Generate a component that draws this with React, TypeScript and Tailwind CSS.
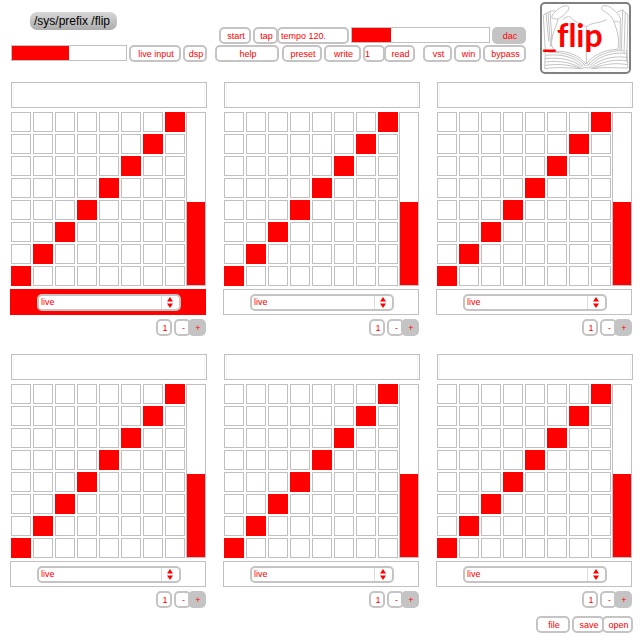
import React, { useState } from "react";

const STEPS = [0, 1, 2, 3, 4, 5, 6, 7];

const BOX = "h-[17px] rounded-[5px] border-2 border-[#c4c4c4] bg-white";

function Pill({
  children,
  className = "",
  filled = false,
}: {
  children: React.ReactNode;
  className?: string;
  filled?: boolean;
}) {
  return (
    <button
      type="button"
      className={`flex h-[17px] shrink-0 items-center justify-center whitespace-nowrap rounded-[5px] border-2 border-[#c4c4c4] pl-[2px] pt-0.5 leading-[13px] ${
        filled ? "bg-[#c4c4c4]" : "bg-white"
      } ${className}`}
    >
      {children}
    </button>
  );
}

function Meter({ label, fill, className }: { label: string; fill: number; className: string }) {
  return (
    <div
      role="meter"
      aria-label={label}
      aria-valuenow={fill}
      aria-valuemin={0}
      aria-valuemax={100}
      className={`h-4 border border-[#c0c0c0] bg-white ${className}`}
    >
      <div className="h-full bg-[#ff0000]" style={{ width: `${fill}%` }} />
    </div>
  );
}

function Logo() {
  return (
    <div className="relative h-[72px] w-[91px] shrink-0 overflow-hidden rounded-[5px] border-2 border-[#808080] bg-white">
      <svg
        viewBox="36 12 261 204"
        className="h-full w-full"
        fill="none"
        stroke="#b8b8b8"
        strokeWidth="2.5"
        strokeLinejoin="round"
        aria-hidden="true"
      >
        <path d="M169 80 C150 72 134 66 122 52 C116 48 106 52 98 58 M116 20 C108 14 94 20 84 28 C74 36 62 48 66 54 C70 58 78 54 84 58 C90 52 96 50 100 46 C108 38 120 28 116 20 M84 58 C78 84 64 104 64 130 C64 142 72 150 78 154 C112 152 148 166 168 192" />
        <path d="M169 80 C186 66 206 72 230 58 M216 20 C226 10 246 24 256 34 C266 44 276 56 270 66 C262 70 262 58 252 66 C246 50 236 42 226 36 C218 32 212 26 216 20 M252 66 C258 84 270 110 264 148 C228 148 188 164 170 192" />
        <path d="M169 80 V192" />
        <path d="M76 32 L60 34 L66 122 M60 34 L48 40 L56 124 M48 40 L40 46 L46 154 M54 38 L62 140" />
        <path d="M262 36 L278 30 L274 150 M278 30 L286 38 L282 160 M286 38 L294 44 L290 186 M271 66 L270 150" />
        <path d="M46 154 L44 206 C84 200 120 204 154 206 C162 202 180 202 188 206 C222 200 260 204 294 204 L290 150" />
        <path d="M48 166 C98 160 140 174 160 200 M46 176 C96 170 136 182 156 202 M46 186 C94 180 130 190 152 204 M46 196 C92 190 124 196 150 205 M54 158 C100 154 146 170 164 196" />
        <path d="M288 160 C236 156 198 174 178 200 M290 172 C240 166 202 182 182 202 M290 182 C244 176 208 190 186 204 M292 194 C248 186 214 196 190 205 M280 152 C236 150 194 168 174 196" />
        <path d="M160 190 C164 198 174 198 180 190" />
      </svg>
      <div className="absolute inset-x-0 top-[11px] whitespace-nowrap font-['Lato'] text-[32px] font-bold leading-[40px] text-[#ff0000] [font-variant-ligatures:none]">
        _flip
      </div>
    </div>
  );
}

function Sequencer({ id, active = false }: { id: number; active?: boolean }) {
  const [mode, setMode] = useState("live");
  return (
    <section aria-label={`Track ${id}`}>
      <div className="ml-px h-[26px] border border-[#c0c0c0] bg-white px-px">
        <div className="h-full border-x border-[#f4f4f4]" />
      </div>

      <div className="mx-px mt-1 flex gap-px">
        <div className="grid flex-1 grid-cols-8 gap-0.5">
          {STEPS.map((row) =>
            STEPS.map((col) => (
              <button
                key={`${row}-${col}`}
                type="button"
                aria-label={`Step ${col + 1}, row ${row + 1}`}
                className={`aspect-square ${
                  row + col === 7 ? "bg-[#ff0000]" : "border border-[#c0c0c0] bg-white"
                }`}
              />
            )),
          )}
        </div>
        <div className="flex w-5 flex-col justify-end border border-[#c0c0c0] bg-white">
          <div className="bg-[#ff0000]" style={{ height: "48%" }} />
        </div>
      </div>

      <div
        className={`mr-px mt-[3px] flex h-[26px] items-center justify-center border pl-0.5 ${
          active ? "border-[#ff0000] bg-[#ff0000]" : "border-[#c0c0c0] bg-white"
        }`}
      >
        <div className="relative w-36">
          <select
            aria-label={`Source ${id}`}
            value={mode}
            onChange={(e) => setMode(e.target.value)}
            className={`${BOX} block w-full appearance-none pl-[2px] leading-[13px] outline-none`}
          >
            <option>live</option>
            <option>record</option>
          </select>
          <svg
            viewBox="0 0 18 13"
            className="pointer-events-none absolute right-[2px] top-[2px] h-[13px] w-[18px]"
            aria-hidden="true"
          >
            <path d="M0.5 0V13" stroke="#dcdcdc" />
            <path d="M9 1L12 5.5H6Z M9 12L12 7.5H6Z" fill="#ff0000" />
          </svg>
        </div>
      </div>

      <div className="mr-px mt-1 flex justify-end">
        <input
          aria-label={`Preset ${id}`}
          defaultValue="1"
          className={`${BOX} mr-0.5 w-4 pl-[2px] text-center outline-none`}
        />
        <Pill className="w-[17px]">-</Pill>
        <Pill className="-ml-[3px] w-[18px]" filled>
          +
        </Pill>
      </div>
    </section>
  );
}

export default function App() {
  return (
    <main className="bg-white pb-[3px] pl-[10px] pr-[7px] pt-0.5 font-['Liberation_Sans',Arial,sans-serif] text-[9px] leading-[13px] text-[#ff0000]">
      <header className="flex h-[80px] items-start pl-px pr-0.5">
        <div className="w-[196px] shrink-0 pt-[10px]">
          <button
            type="button"
            className="ml-[19px] block h-[18px] rounded-[7px] bg-linear-to-b from-[#d8d8d8] to-[#acacac] pl-1 pr-[7px] text-[12px] leading-[18px] text-black"
          >
            /sys/prefix /flip
          </button>
          <div className="mt-[15px] flex gap-0.5">
            <Meter label="Input level" fill={50} className="flex-1" />
            <Pill className="w-[52px]">live input</Pill>
            <Pill className="w-6">dsp</Pill>
          </div>
        </div>

        <div className="ml-2 flex-1 pt-[25px]">
          <div className="flex gap-0.5 pl-1">
            <Pill className="w-8">start</Pill>
            <Pill className="w-[25px]">tap</Pill>
            <input
              aria-label="Tempo"
              defaultValue="tempo 120."
              className={`${BOX} -ml-[3px] w-[72px] pl-[2px] outline-none`}
            />
            <Meter label="Output level" fill={28.5} className="flex-1" />
            <Pill className="w-[34px]" filled>
              dac
            </Pill>
          </div>
          <div className="mt-px flex gap-0.5">
            <Pill className="mr-px w-16">help</Pill>
            <Pill className="w-10">preset</Pill>
            <Pill className="w-[37px]">write</Pill>
            <input
              aria-label="Preset number"
              defaultValue="1"
              className={`${BOX} w-[22px] outline-none`}
            />
            <Pill className="-ml-[3px] w-[31px]">read</Pill>
            <Pill className="ml-auto w-[29px]">vst</Pill>
            <Pill className="w-[27px]">win</Pill>
            <Pill className="w-[43px]">bypass</Pill>
          </div>
        </div>

        <div className="ml-[14px]">
          <Logo />
        </div>
      </header>

      <div className="grid grid-cols-3 gap-x-4 gap-y-[18px]">
        {[1, 2, 3, 4, 5, 6].map((id) => (
          <Sequencer key={id} id={id} active={id === 1} />
        ))}
      </div>

      <footer className="mt-2 flex justify-end">
        <Pill className="mr-0.5 w-[34px]">file</Pill>
        <Pill className="w-8">save</Pill>
        <Pill className="-ml-0.5 w-[31px]">open</Pill>
      </footer>
    </main>
  );
}
